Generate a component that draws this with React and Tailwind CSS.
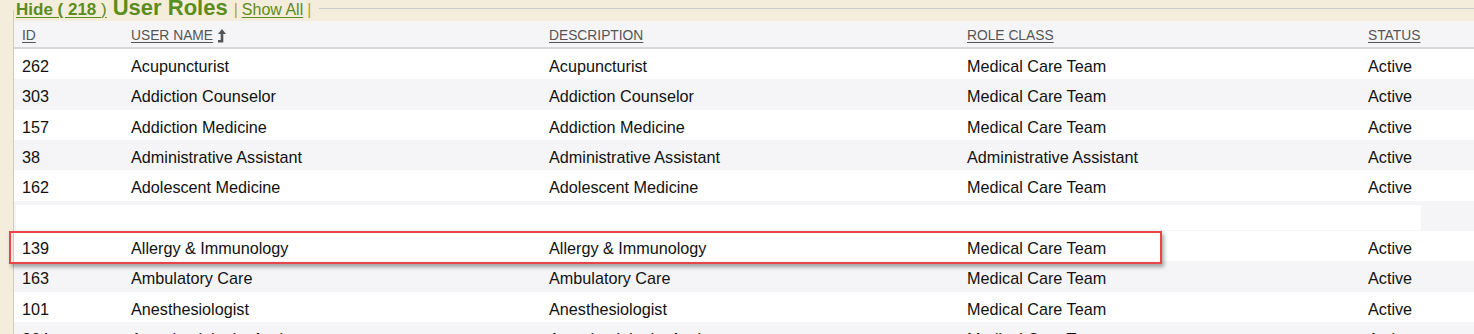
import React from "react";

const roles = [
  { id: "262", name: "Acupuncturist", desc: "Acupuncturist", cls: "Medical Care Team", status: "Active" },
  { id: "303", name: "Addiction Counselor", desc: "Addiction Counselor", cls: "Medical Care Team", status: "Active" },
  { id: "157", name: "Addiction Medicine", desc: "Addiction Medicine", cls: "Medical Care Team", status: "Active" },
  { id: "38", name: "Administrative Assistant", desc: "Administrative Assistant", cls: "Administrative Assistant", status: "Active" },
  { id: "162", name: "Adolescent Medicine", desc: "Adolescent Medicine", cls: "Medical Care Team", status: "Active" },
  null,
  { id: "139", name: "Allergy & Immunology", desc: "Allergy & Immunology", cls: "Medical Care Team", status: "Active" },
  { id: "163", name: "Ambulatory Care", desc: "Ambulatory Care", cls: "Medical Care Team", status: "Active" },
  { id: "101", name: "Anesthesiologist", desc: "Anesthesiologist", cls: "Medical Care Team", status: "Active" },
  { id: "264", name: "Anesthesiologist Assistant", desc: "Anesthesiologist Assistant", cls: "Medical Care Team", status: "Active" },
];

const cols = "grid grid-cols-[117px_418px_418px_401px_1fr]";

function SortUp() {
  return (
    <svg width="9" height="14" viewBox="0 0 9 14" className="ml-[4px] inline-block">
      <path d="M5 0 L9 5 L6.3 5 L6.3 13.5 L1 13.5 L1 11 L3.7 11 L3.7 5 L1 5 Z" fill="#555" />
    </svg>
  );
}

function HeaderCell({ children, first }) {
  return (
    <div className={`flex items-center pt-[4px] ${first ? "pl-[8px]" : ""}`}>
      <span className="underline underline-offset-[2px] decoration-[#555]">{children}</span>
      {children === "USER NAME" && <SortUp />}
    </div>
  );
}

export default function App() {
  return (
    <div className="relative h-[334px] w-[1474px] overflow-hidden bg-[#f5eddc] font-['Liberation_Sans',Arial,sans-serif]">
      {/* fieldset frame: left rule starts below the legend */}
      <div className="ml-[13px] mt-[10px] flex flex-col border-l border-[#cfcbc0]">
        {/* legend line */}
        <div className="-mt-[10px] flex h-[21px] items-baseline overflow-hidden pl-[2px] text-[#5b8c1e]">
          <a className="text-[17px] leading-[15px] underline underline-offset-[2px]">
            <span className="font-bold">Hide ( 218 </span>)
          </a>
          <span className="ml-[6px] text-[22px] font-bold leading-[15px]">User Roles</span>
          <span className="ml-[6px] text-[16px] leading-[15px] text-[#b4a232]">|</span>
          <a className="ml-[4px] text-[16px] leading-[15px] underline underline-offset-[2px]">Show All</a>
          <span className="ml-[4px] text-[16px] leading-[15px] text-[#b4a232]">|</span>
          <div className="ml-[8px] mt-[8px] h-0 flex-1 self-start border-t border-[#cccccc]" />
        </div>

        {/* column headers */}
        <div className={`${cols} h-[28px] border-b-2 border-[#d8d8d8] bg-[#f5f5f7] text-[13.8px] text-[#555]`}>
          <HeaderCell first>ID</HeaderCell>
          <HeaderCell>USER NAME</HeaderCell>
          <HeaderCell>DESCRIPTION</HeaderCell>
          <HeaderCell>ROLE CLASS</HeaderCell>
          <HeaderCell>STATUS</HeaderCell>
        </div>

        {/* rows */}
        {roles.map((r, i) => {
          const bg = i % 2 === 0 ? "bg-white" : "bg-[#f5f5f7]";
          if (!r) {
            return (
              <div key={i} className={`h-[30.35px] ${bg}`}>
                <div className="ml-[2px] mt-[4px] h-[25px] w-[1405px] bg-white" />
              </div>
            );
          }
          return (
            <div key={i} className={`${cols} h-[30.35px] ${bg} pt-[4px] text-[16.2px] text-[#111]`}>
              <div className="flex items-center pl-[8px]">{r.id}</div>
              <div className="flex items-center">{r.name}</div>
              <div className="flex items-center">{r.desc}</div>
              <div className="flex items-center">{r.cls}</div>
              <div className="flex items-center">{r.status}</div>
            </div>
          );
        })}
      </div>

      {/* highlight around the selected role */}
      <div className="pointer-events-none absolute left-[9px] top-[231px] h-[33px] w-[1153px] border-2 border-[#e84548] shadow-[2px_3px_4px_rgba(0,0,0,0.35)]" />
    </div>
  );
}
